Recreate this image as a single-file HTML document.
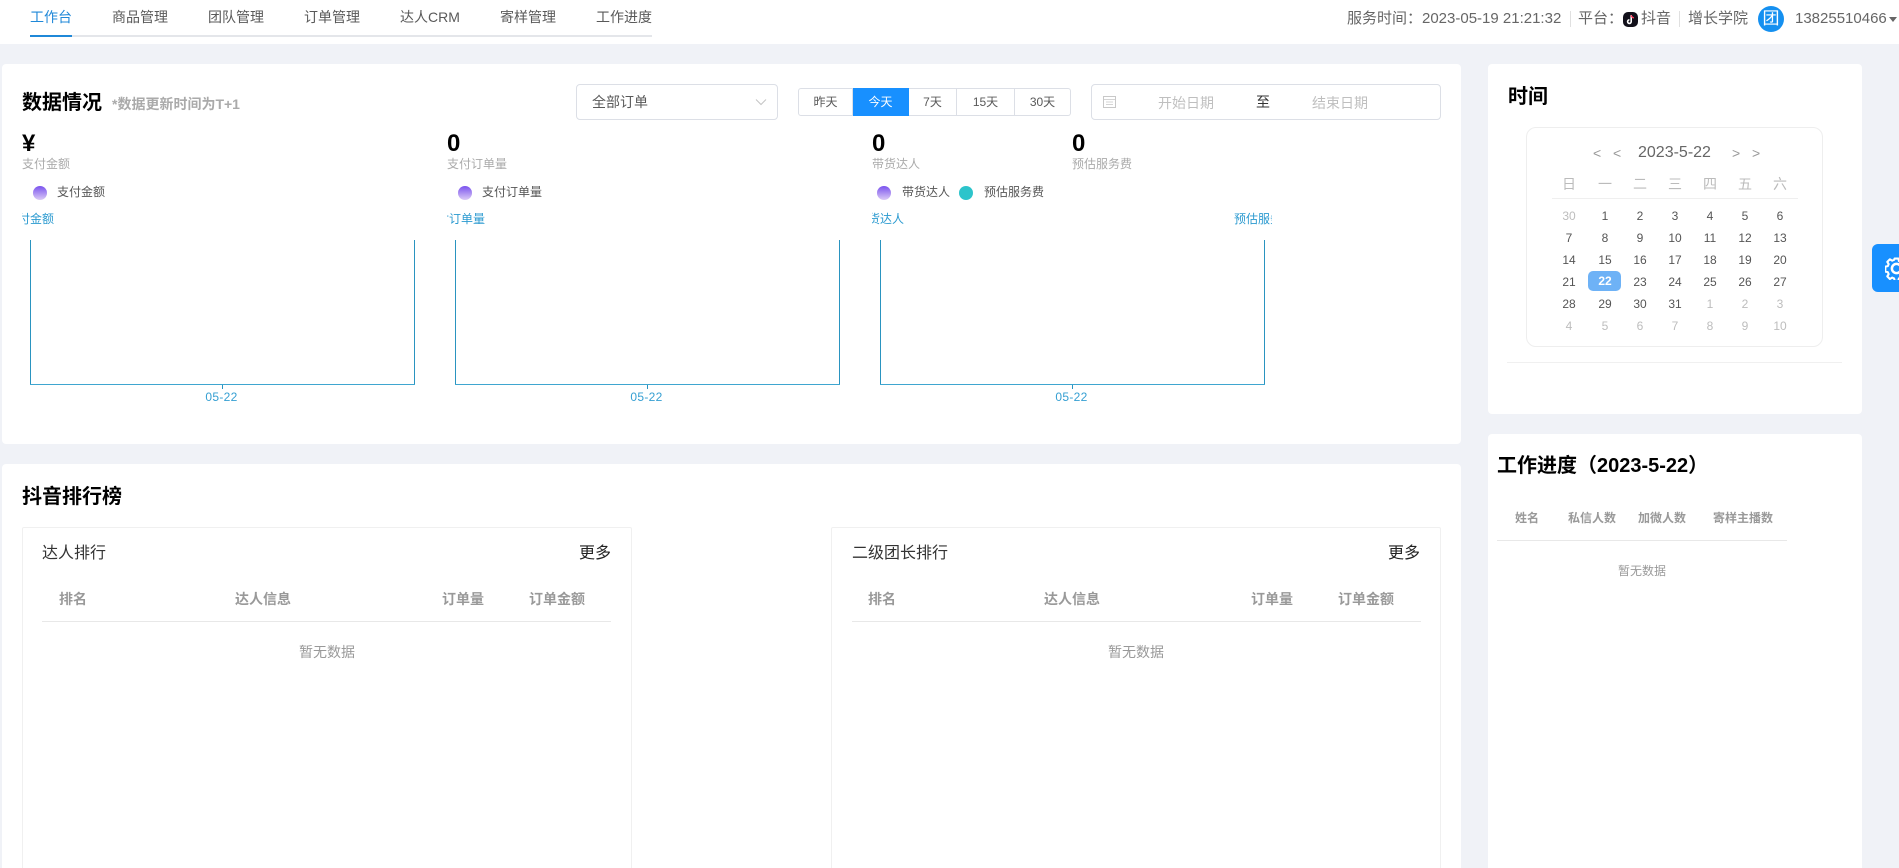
<!DOCTYPE html>
<html lang="zh-CN">
<head>
<meta charset="utf-8">
<title>工作台</title>
<style>
html,body{margin:0;padding:0;width:1899px;height:868px;overflow:hidden;background:#f0f2f7}
body{position:relative;font-family:"Liberation Sans","Noto Sans CJK SC",sans-serif;font-size:14px;color:#555}
.a{position:absolute;white-space:nowrap;line-height:20px;height:20px}
.b{position:absolute;box-sizing:border-box}
.card{position:absolute;background:#fff;border-radius:4px}
.h{font-size:20px;font-weight:700;color:#000;line-height:28px;height:28px}
.nav{color:#595959}
.tr{font-size:15px;color:#666}
.num{font-size:24px;font-weight:700;color:#000;line-height:28px;height:28px}
.lab{font-size:12px;color:#aaa}
.leg{font-size:12px;color:#555}
.dot{position:absolute;top:186px;width:14px;height:14px;border-radius:50%;background:linear-gradient(#7a52ee,#dccbf6)}
.clip{position:absolute;top:209px;height:20px;overflow:hidden}
.clip span{position:absolute;top:0;font-size:12px;line-height:20px;color:#2b9ad0;white-space:nowrap}
.ax{position:absolute;background:#2a94c0}
.xl{position:absolute;top:387px;width:60px;text-align:center;font-size:12px;line-height:20px;color:#359fd2;letter-spacing:.3px}
.seg{position:absolute;top:88px;height:28px;line-height:26px;text-align:center;font-size:12px;color:#595959;border:1px solid #dcdfe6;border-left:0;box-sizing:border-box;background:#fff}
.ph{color:#bfbfbf}
.th{font-weight:700;color:#999}
.cal{position:absolute;width:34px;text-align:center;font-size:12px;line-height:20px;height:20px;color:#555}
.g{color:#bdbdbd}
.w{font-size:14px;color:#bbb}
.ln{position:absolute;height:1px;background:#e8e8e8}
.panel{position:absolute;top:527px;height:341px;background:#fff;border:1px solid #f0f0f0;border-bottom:0;box-sizing:border-box;border-radius:2px 2px 0 0}
</style>
</head>
<body>
<!-- Top bar -->
<div class="b" style="left:0;top:0;width:1899px;height:44px;background:#fff"></div>
<div class="a" style="left:30px;top:7px;color:#1f88d8">工作台</div>
<div class="a nav" style="left:112px;top:7px">商品管理</div>
<div class="a nav" style="left:208px;top:7px">团队管理</div>
<div class="a nav" style="left:304px;top:7px">订单管理</div>
<div class="a nav" style="left:400px;top:7px">达人CRM</div>
<div class="a nav" style="left:500px;top:7px">寄样管理</div>
<div class="a nav" style="left:596px;top:7px">工作进度</div>
<div class="b" style="left:30px;top:35px;width:622px;height:2px;background:#e4e6ea"></div>
<div class="b" style="left:30px;top:35px;width:42px;height:2px;background:#1f88d8"></div>

<div class="a tr" style="left:1347px;top:9px">服务时间：2023-05-19 21:21:32</div>
<div class="b" style="left:1570px;top:11px;width:1px;height:16px;background:#e0e0e0"></div>
<div class="a tr" style="left:1578px;top:9px">平台：</div>
<svg class="b" style="left:1623px;top:12px" width="15" height="15" viewBox="0 0 15 15"><rect width="15" height="15" rx="5" fill="#12101a"/><path d="M8.2 3v6.6a1.8 1.8 0 1 1-1.8-1.8" fill="none" stroke="#fff" stroke-width="1.6"/><path d="M8.2 3.2c.3 1.5 1.3 2.4 2.8 2.6" fill="none" stroke="#ff3b5c" stroke-width="1.4"/></svg>
<div class="a tr" style="left:1641px;top:9px">抖音</div>
<div class="b" style="left:1679px;top:11px;width:1px;height:16px;background:#e0e0e0"></div>
<div class="a tr" style="left:1688px;top:9px">增长学院</div>
<div class="b" style="left:1758px;top:6px;width:26px;height:26px;border-radius:50%;background:#1590f0;color:#fff;text-align:center;line-height:25px;font-size:17px">团</div>
<div class="a tr" style="left:1795px;top:9px">13825510466</div>
<div class="b" style="left:1889px;top:17px;width:0;height:0;border-left:4px solid transparent;border-right:4px solid transparent;border-top:5px solid #666"></div>

<!-- Data card -->
<div class="card" style="left:2px;top:64px;width:1459px;height:380px"></div>
<div class="a h" style="left:22px;top:89px">数据情况</div>
<div class="a" style="left:112px;top:94px;font-weight:700;color:#aaa">*数据更新时间为T+1</div>

<div class="b" style="left:576px;top:84px;width:202px;height:36px;border:1px solid #dcdfe6;border-radius:4px;background:#fff"></div>
<div class="a" style="left:592px;top:92px;color:#595959">全部订单</div>
<svg class="b" style="left:755px;top:98px" width="12" height="8" viewBox="0 0 12 8"><path d="M1 1.5l5 5 5-5" fill="none" stroke="#c4c4c4" stroke-width="1"/></svg>

<div class="seg" style="left:798px;width:55px;border-left:1px solid #dcdfe6;border-radius:3px 0 0 3px">昨天</div>
<div class="seg" style="left:853px;width:56px;background:#1890ff;color:#fff;border-color:#1890ff">今天</div>
<div class="seg" style="left:909px;width:48px">7天</div>
<div class="seg" style="left:957px;width:58px">15天</div>
<div class="seg" style="left:1015px;width:56px;border-radius:0 3px 3px 0">30天</div>

<div class="b" style="left:1091px;top:84px;width:350px;height:36px;border:1px solid #dcdfe6;border-radius:4px;background:#fff"></div>
<svg class="b" style="left:1103px;top:96px" width="13" height="12" viewBox="0 0 13 12"><rect x=".5" y=".5" width="12" height="11" fill="none" stroke="#c8c8c8"/><path d="M1 3.5h11M3 6h7M3 8.5h7" stroke="#d4d4d4" stroke-width="1"/></svg>
<div class="a ph" style="left:1158px;top:93px">开始日期</div>
<div class="a" style="left:1256px;top:92px;color:#333">至</div>
<div class="a ph" style="left:1312px;top:93px">结束日期</div>

<!-- Stats -->
<div class="a num" style="left:22px;top:130px">¥</div>
<div class="a lab" style="left:22px;top:154px">支付金额</div>
<div class="dot" style="left:33px"></div>
<div class="a leg" style="left:57px;top:182px">支付金额</div>

<div class="a num" style="left:447px;top:130px">0</div>
<div class="a lab" style="left:447px;top:154px">支付订单量</div>
<div class="dot" style="left:458px"></div>
<div class="a leg" style="left:482px;top:182px">支付订单量</div>

<div class="a num" style="left:872px;top:130px">0</div>
<div class="a lab" style="left:872px;top:154px">带货达人</div>
<div class="dot" style="left:877px"></div>
<div class="a leg" style="left:902px;top:182px">带货达人</div>
<div class="dot" style="left:959px;background:#2cc4cb"></div>
<div class="a leg" style="left:984px;top:182px">预估服务费</div>

<div class="a num" style="left:1072px;top:130px">0</div>
<div class="a lab" style="left:1072px;top:154px">预估服务费</div>

<!-- Chart labels -->
<div class="clip" style="left:22px;width:60px"><span style="left:-16px">支付金额</span></div>
<div class="clip" style="left:447px;width:60px"><span style="left:-22px">支付订单量</span></div>
<div class="clip" style="left:872px;width:60px"><span style="left:-16px">带货达人</span></div>
<div class="clip" style="left:1200px;width:72px"><span style="left:34px">预估服务费</span></div>

<!-- Charts -->
<div class="ax" style="left:30px;top:240px;width:1px;height:145px"></div>
<div class="ax" style="left:414px;top:240px;width:1px;height:145px"></div>
<div class="ax" style="left:30px;top:384px;width:385px;height:1px;background:#3fa6d0"></div>
<div class="ax" style="left:222px;top:385px;width:1px;height:4px"></div>
<div class="xl" style="left:191.5px">05-22</div>

<div class="ax" style="left:455px;top:240px;width:1px;height:145px"></div>
<div class="ax" style="left:839px;top:240px;width:1px;height:145px"></div>
<div class="ax" style="left:455px;top:384px;width:385px;height:1px;background:#3fa6d0"></div>
<div class="ax" style="left:647px;top:385px;width:1px;height:4px"></div>
<div class="xl" style="left:616.5px">05-22</div>

<div class="ax" style="left:880px;top:240px;width:1px;height:145px"></div>
<div class="ax" style="left:1264px;top:240px;width:1px;height:145px"></div>
<div class="ax" style="left:880px;top:384px;width:385px;height:1px;background:#3fa6d0"></div>
<div class="ax" style="left:1072px;top:385px;width:1px;height:4px"></div>
<div class="xl" style="left:1041.5px">05-22</div>

<!-- Ranking card -->
<div class="card" style="left:2px;top:464px;width:1459px;height:404px;border-radius:4px 4px 0 0"></div>
<div class="a h" style="left:22px;top:483px">抖音排行榜</div>

<div class="panel" style="left:22px;width:610px"></div>
<div class="a" style="left:42px;top:544px;font-size:16px;color:#333">达人排行</div>
<div class="a" style="left:579px;top:544px;font-size:16px;color:#222">更多</div>
<div class="a th" style="left:59px;top:589px">排名</div>
<div class="a th" style="left:235px;top:589px">达人信息</div>
<div class="a th" style="left:442px;top:589px">订单量</div>
<div class="a th" style="left:529px;top:589px">订单金额</div>
<div class="ln" style="left:42px;top:621px;width:569px"></div>
<div class="a" style="left:299px;top:642px;color:#999">暂无数据</div>

<div class="panel" style="left:831px;width:610px"></div>
<div class="a" style="left:852px;top:544px;font-size:16px;color:#333">二级团长排行</div>
<div class="a" style="left:1388px;top:544px;font-size:16px;color:#222">更多</div>
<div class="a th" style="left:868px;top:589px">排名</div>
<div class="a th" style="left:1044px;top:589px">达人信息</div>
<div class="a th" style="left:1251px;top:589px">订单量</div>
<div class="a th" style="left:1338px;top:589px">订单金额</div>
<div class="ln" style="left:852px;top:621px;width:569px"></div>
<div class="a" style="left:1108px;top:642px;color:#999">暂无数据</div>

<!-- Time card -->
<div class="card" style="left:1488px;top:64px;width:374px;height:350px"></div>
<div class="a h" style="left:1508px;top:83px">时间</div>
<div class="b" style="left:1526px;top:127px;width:297px;height:220px;border:1px solid #eeeeee;border-radius:10px"></div>
<div class="a" style="left:1593px;top:143px;font-size:14px;color:#999">&lt;</div>
<div class="a" style="left:1613px;top:143px;font-size:14px;color:#999">&lt;</div>
<div class="a" style="left:1638px;top:143px;font-size:16px;color:#666">2023-5-22</div>
<div class="a" style="left:1732px;top:143px;font-size:14px;color:#999">&gt;</div>
<div class="a" style="left:1752px;top:143px;font-size:14px;color:#999">&gt;</div>

<div class="cal w" style="left:1552px;top:174px;font-size:14px;color:#bbb">日</div>
<div class="cal w" style="left:1588px;top:174px;font-size:14px;color:#bbb">一</div>
<div class="cal w" style="left:1623px;top:174px;font-size:14px;color:#bbb">二</div>
<div class="cal w" style="left:1658px;top:174px;font-size:14px;color:#bbb">三</div>
<div class="cal w" style="left:1693px;top:174px;font-size:14px;color:#bbb">四</div>
<div class="cal w" style="left:1728px;top:174px;font-size:14px;color:#bbb">五</div>
<div class="cal w" style="left:1763px;top:174px;font-size:14px;color:#bbb">六</div>
<div class="ln" style="left:1552px;top:198px;width:246px;background:#efefef"></div>

<div class="cal g" style="left:1552px;top:206px">30</div><div class="cal" style="left:1588px;top:206px">1</div><div class="cal" style="left:1623px;top:206px">2</div><div class="cal" style="left:1658px;top:206px">3</div><div class="cal" style="left:1693px;top:206px">4</div><div class="cal" style="left:1728px;top:206px">5</div><div class="cal" style="left:1763px;top:206px">6</div>
<div class="cal" style="left:1552px;top:228px">7</div><div class="cal" style="left:1588px;top:228px">8</div><div class="cal" style="left:1623px;top:228px">9</div><div class="cal" style="left:1658px;top:228px">10</div><div class="cal" style="left:1693px;top:228px">11</div><div class="cal" style="left:1728px;top:228px">12</div><div class="cal" style="left:1763px;top:228px">13</div>
<div class="cal" style="left:1552px;top:250px">14</div><div class="cal" style="left:1588px;top:250px">15</div><div class="cal" style="left:1623px;top:250px">16</div><div class="cal" style="left:1658px;top:250px">17</div><div class="cal" style="left:1693px;top:250px">18</div><div class="cal" style="left:1728px;top:250px">19</div><div class="cal" style="left:1763px;top:250px">20</div>
<div class="b" style="left:1588px;top:271px;width:33px;height:20px;border-radius:5px;background:#6eb2f6"></div>
<div class="cal" style="left:1552px;top:272px">21</div><div class="cal" style="left:1588px;top:271px;color:#fff;font-weight:700">22</div><div class="cal" style="left:1623px;top:272px">23</div><div class="cal" style="left:1658px;top:272px">24</div><div class="cal" style="left:1693px;top:272px">25</div><div class="cal" style="left:1728px;top:272px">26</div><div class="cal" style="left:1763px;top:272px">27</div>
<div class="cal" style="left:1552px;top:294px">28</div><div class="cal" style="left:1588px;top:294px">29</div><div class="cal" style="left:1623px;top:294px">30</div><div class="cal" style="left:1658px;top:294px">31</div><div class="cal g" style="left:1693px;top:294px">1</div><div class="cal g" style="left:1728px;top:294px">2</div><div class="cal g" style="left:1763px;top:294px">3</div>
<div class="cal g" style="left:1552px;top:316px">4</div><div class="cal g" style="left:1588px;top:316px">5</div><div class="cal g" style="left:1623px;top:316px">6</div><div class="cal g" style="left:1658px;top:316px">7</div><div class="cal g" style="left:1693px;top:316px">8</div><div class="cal g" style="left:1728px;top:316px">9</div><div class="cal g" style="left:1763px;top:316px">10</div>
<div class="ln" style="left:1507px;top:362px;width:335px;background:#f0f0f0"></div>

<!-- Work progress card -->
<div class="card" style="left:1488px;top:434px;width:374px;height:434px;border-radius:4px 4px 0 0"></div>
<div class="a h" style="left:1497px;top:452px">工作进度（2023-5-22）</div>
<div class="a" style="left:1515px;top:508px;font-size:12px;font-weight:700;color:#999">姓名</div>
<div class="a" style="left:1568px;top:508px;font-size:12px;font-weight:700;color:#999">私信人数</div>
<div class="a" style="left:1638px;top:508px;font-size:12px;font-weight:700;color:#999">加微人数</div>
<div class="a" style="left:1713px;top:508px;font-size:12px;font-weight:700;color:#999">寄样主播数</div>
<div class="ln" style="left:1497px;top:540px;width:290px"></div>
<div class="a" style="left:1618px;top:561px;font-size:12px;color:#999">暂无数据</div>

<!-- Settings button -->
<div class="b" style="left:1872px;top:244px;width:27px;height:48px;background:#1890ff;border-radius:6px 0 0 6px;overflow:hidden">
<svg style="position:absolute;left:13px;top:13px" width="23" height="23" viewBox="0 0 22 22"><circle cx="11" cy="11" r="4.4" fill="none" stroke="#fff" stroke-width="2.4"/><path d="M9.2 1.5h3.6l.5 2.4 1.9.8 2.1-1.3 2.5 2.5-1.3 2.1.8 1.9 2.4.5v3.6l-2.4.5-.8 1.9 1.3 2.1-2.5 2.5-2.1-1.3-1.9.8-.5 2.4H9.2l-.5-2.4-1.9-.8-2.1 1.3-2.5-2.5 1.3-2.1-.8-1.9-2.4-.5V9.2l2.4-.5.8-1.9-1.3-2.1 2.5-2.5 2.1 1.3 1.9-.8z" fill="none" stroke="#fff" stroke-width="2" stroke-linejoin="round"/></svg>
</div>
</body>
</html>
